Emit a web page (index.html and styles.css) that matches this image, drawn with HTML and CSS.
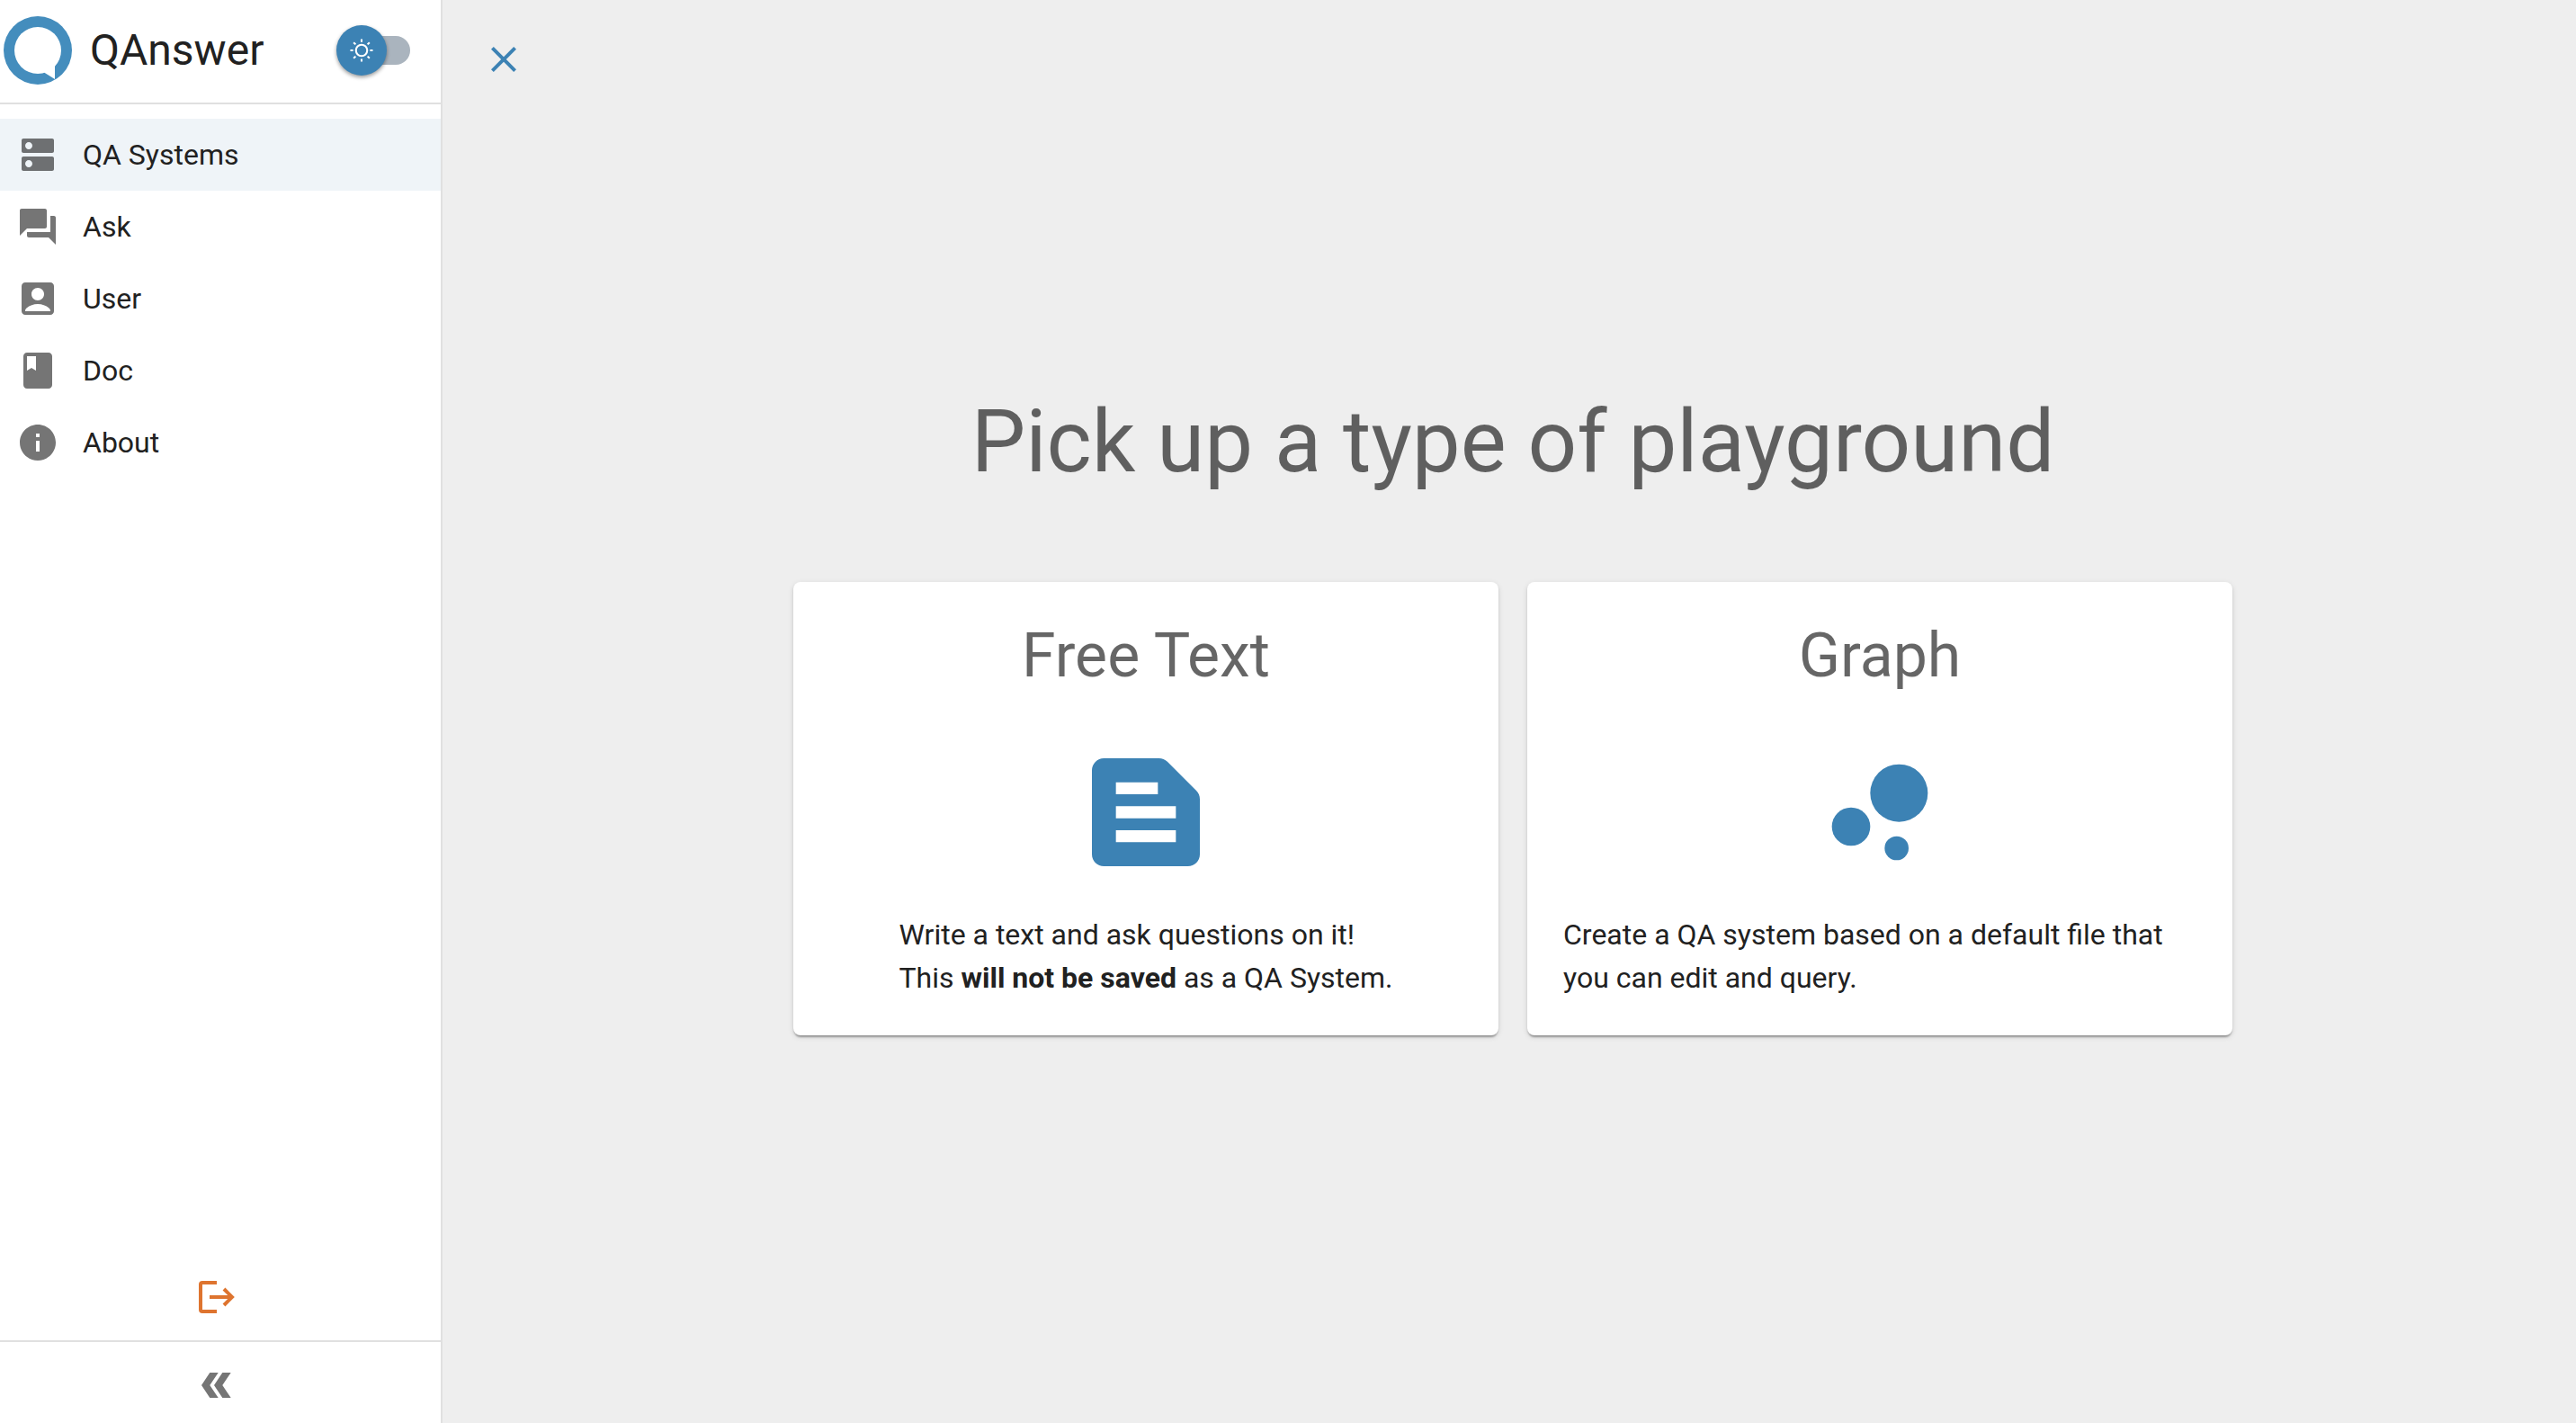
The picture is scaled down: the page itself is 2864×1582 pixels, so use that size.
FILE: index.html
```html
<!DOCTYPE html>
<html lang="en">
<head>
<meta charset="utf-8">
<meta name="viewport" content="width=device-width, initial-scale=1">
<title>QAnswer</title>
<link rel="stylesheet" href="styles.css">
</head>
<body>
<div class="app">
  <aside class="sidebar">
    <header class="brand">
      <svg class="brand-logo" viewBox="0 0 76 76" aria-hidden="true">
        <circle cx="38" cy="38" r="38" fill="#448dbd"/>
        <circle cx="38" cy="38" r="26" fill="#fff"/>
        <path d="M45 62.500L57 70V54L50 50z" fill="#fff"/>
      </svg>
      <span class="brand-name">QAnswer</span>
      <label class="theme-switch">
        <input type="checkbox" role="switch" aria-label="Dark theme">
        <span class="theme-thumb">
          <svg viewBox="0 0 20 20" aria-hidden="true"><path d="M9.305 1.667V3.75h1.389V1.667h-1.39zm-4.707 1.95l-.982.982L5.09 6.072l.982-.982-1.473-1.473zm10.802 0L13.927 5.09l.982.982 1.473-1.473-.982-.982zM10 5.139a4.872 4.872 0 00-4.862 4.86A4.872 4.872 0 0010 14.862 4.872 4.872 0 0014.86 10 4.872 4.872 0 0010 5.139zm0 1.389A3.462 3.462 0 0113.471 10a3.462 3.462 0 01-3.473 3.472A3.462 3.462 0 016.527 10 3.462 3.462 0 0110 6.528zM1.665 9.305v1.39h2.083v-1.39H1.666zm14.583 0v1.39h2.084v-1.39h-2.084zM5.09 13.928L3.616 15.4l.982.982 1.473-1.473-.982-.982zm9.82 0l-.982.982 1.473 1.473.982-.982-1.473-1.473zM9.305 16.25v2.083h1.389V16.25h-1.39z"/></svg>
        </span>
      </label>
    </header>
    <nav class="menu" aria-label="Main">
      <a class="menu-item is-active" href="#systems" aria-current="page">
        <svg class="icon" viewBox="0 0 24 24" aria-hidden="true"><path d="M20 13H4c-.55 0-1 .45-1 1v6c0 .55.45 1 1 1h16c.55 0 1-.45 1-1v-6c0-.55-.45-1-1-1zM7 19c-1.100 0-2-.9-2-2s.9-2 2-2 2 .9 2 2-.9 2-2 2zM20 3H4c-.55 0-1 .45-1 1v6c0 .55.45 1 1 1h16c.55 0 1-.45 1-1V4c0-.55-.45-1-1-1zM7 9c-1.100 0-2-.9-2-2s.9-2 2-2 2 .9 2 2-.9 2-2 2z"/></svg>
        <span>QA Systems</span>
      </a>
      <a class="menu-item" href="#ask">
        <svg class="icon" viewBox="0 0 24 24" aria-hidden="true"><path d="M21 6h-2v9H6v2c0 .55.45 1 1 1h11l4 4V7c0-.55-.45-1-1-1zm-4 6V3c0-.55-.45-1-1-1H3c-.55 0-1 .45-1 1v14l4-4h10c.55 0 1-.45 1-1z"/></svg>
        <span>Ask</span>
      </a>
      <a class="menu-item" href="#user">
        <svg class="icon" viewBox="0 0 24 24" aria-hidden="true"><path d="M19 3H5c-1.100 0-2 .9-2 2v14c0 1.100.9 2 2 2h14c1.100 0 2-.9 2-2V5c0-1.100-.9-2-2-2zm-7 3c1.930 0 3.500 1.570 3.500 3.500S13.930 13 12 13s-3.500-1.570-3.500-3.500S10.070 6 12 6zm7 13H5v-.23c0-.62.28-1.200.76-1.580C7.470 15.820 9.640 15 12 15s4.530.82 6.240 2.190c.48.38.76.97.76 1.580V19z"/></svg>
        <span>User</span>
      </a>
      <a class="menu-item" href="#doc">
        <svg class="icon" viewBox="0 0 24 24" aria-hidden="true"><path d="M18 2H6c-1.100 0-2 .9-2 2v16c0 1.100.9 2 2 2h12c1.100 0 2-.9 2-2V4c0-1.100-.9-2-2-2zM6 4h5v8l-2.500-1.500L6 12V4z"/></svg>
        <span>Doc</span>
      </a>
      <a class="menu-item" href="#about">
        <svg class="icon" viewBox="0 0 24 24" aria-hidden="true"><path d="M12 2C6.480 2 2 6.480 2 12s4.480 10 10 10 10-4.480 10-10S17.520 2 12 2zm1 15h-2v-6h2v6zm0-8h-2V7h2v2z"/></svg>
        <span>About</span>
      </a>
    </nav>
    <footer class="sidebar-footer">
      <button class="icon-button logout" type="button" aria-label="Log out">
        <svg class="icon" viewBox="0 0 48 48" aria-hidden="true"><path d="M25 8H9a2 2 0 0 0-2 2v28a2 2 0 0 0 2 2h16M17 24h25M33 15l9 9-9 9" fill="none" stroke="currentColor" stroke-width="4"/></svg>
      </button>
      <button class="icon-button collapse" type="button" aria-label="Collapse menu">
        <svg class="icon" viewBox="0 0 48 48" aria-hidden="true"><path d="M17.300 10h9.400l-9.400 14 9.400 14h-9.400L8 24zM31.300 10h9.400l-9.400 14 9.400 14h-9.400L22 24z"/></svg>
      </button>
    </footer>
  </aside>
  <main class="content">
    <div class="toolbar">
      <button class="icon-button close" type="button" aria-label="Close">
        <svg class="icon" viewBox="0 0 24 24" aria-hidden="true"><path d="M19 6.410L17.590 5 12 10.590 6.410 5 5 6.410 10.590 12 5 17.590 6.410 19 12 13.410 17.590 19 19 17.590 13.410 12z"/></svg>
      </button>
    </div>
    <section class="picker">
      <h1 class="picker-title">Pick up a type of playground</h1>
      <div class="cards">
        <a class="card" href="#free-text">
          <h2 class="card-title">Free Text</h2>
          <svg class="card-icon" viewBox="0 0 24 24" aria-hidden="true"><path d="M20.410 8.410l-4.830-4.830C15.210 3.210 14.700 3 14.170 3H5c-1.100 0-2 .9-2 2v14c0 1.100.9 2 2 2h14c1.100 0 2-.9 2-2V9.830c0-.53-.21-1.040-.59-1.420zM7 7h7v2H7V7zm10 10H7v-2h10v2zm0-4H7v-2h10v2z"/></svg>
          <p class="card-text">Write a text and ask questions on it!<br>This <strong>will not be saved</strong> as a QA System.</p>
        </a>
        <a class="card" href="#graph">
          <h2 class="card-title">Graph</h2>
          <svg class="card-icon" viewBox="0 0 24 24" aria-hidden="true"><circle cx="7.200" cy="14.400" r="3.200"/><circle cx="14.800" cy="18" r="2"/><circle cx="15.200" cy="8.800" r="4.800"/></svg>
          <p class="card-text">Create a QA system based on a default file that you can edit and query.</p>
        </a>
      </div>
    </section>
  </main>
</div>
</body>
</html>
```

FILE: styles.css
```css
:root {
  --primary: #3c82b4;
  --accent: #de742f;
  --text: #212121;
  --muted: rgba(0, 0, 0, 0.6);
  --icon: #757575;
  --divider: #e0e0e0;
  --selected: #eff4f8;
}

* {
  box-sizing: border-box;
}

body {
  margin: 0;
  font: 32px/48px Roboto, "Liberation Sans", sans-serif;
  color: var(--text);
  background: #eee;
}

.app {
  display: flex;
  min-height: 100vh;
}

.icon {
  display: block;
  flex: none;
  width: 48px;
  height: 48px;
  fill: currentColor;
}

.icon-button {
  display: block;
  padding: 0;
  border: 0;
  background: none;
  cursor: pointer;
}

/* Sidebar */

.sidebar {
  display: flex;
  flex-direction: column;
  flex: 0 0 492px;
  background: #fff;
  border-right: 2px solid var(--divider);
}

.brand {
  display: flex;
  align-items: center;
  padding: 18px 34px 20px 4px;
  border-bottom: 2px solid var(--divider);
}

.brand-logo {
  width: 76px;
  height: 76px;
}

.brand-name {
  margin-left: 20px;
  font-size: 48px;
  line-height: 64px;
}

.theme-switch {
  display: flex;
  align-items: center;
  width: 82px;
  height: 56px;
  margin-left: auto;
  position: relative;
  cursor: pointer;
}

.theme-switch input {
  appearance: none;
  width: 68px;
  height: 32px;
  margin: 0 0 0 auto;
  border-radius: 16px;
  background: #aab4be;
}

.theme-thumb {
  position: absolute;
  left: 0;
  top: 0;
  display: grid;
  place-items: center;
  width: 56px;
  height: 56px;
  border-radius: 50%;
  background: var(--primary);
  box-shadow: 0 2px 4px rgba(0, 0, 0, 0.4);
}

.theme-thumb svg {
  width: 30px;
  height: 30px;
  fill: #fff;
}

.menu {
  padding: 16px 0;
}

.menu-item {
  display: flex;
  align-items: center;
  gap: 26px;
  padding: 16px 18px;
  color: inherit;
  text-decoration: none;
}

.menu-item .icon {
  color: rgba(0, 0, 0, 0.54);
}

.is-active {
  background: var(--selected);
}

.sidebar-footer {
  margin-top: auto;
}

.sidebar-footer .icon-button {
  display: flex;
  justify-content: center;
  width: 100%;
  padding-right: 10px;
}

.sidebar-footer .logout {
  padding-top: 24px;
  padding-bottom: 24px;
  color: var(--accent);
  border-bottom: 2px solid var(--divider);
}

.sidebar-footer .collapse {
  padding-top: 24px;
  padding-bottom: 18px;
  color: var(--icon);
}

/* Content */

.content {
  display: grid;
  grid-template-rows: 1fr auto 1fr;
  flex: 1;
  min-width: 0;
}

.toolbar {
  padding: 42px 44px 0;
}

.close {
  color: var(--primary);
}

.picker {
  padding: 4px 32px 0 40px;
}

.picker-title {
  margin: 0 0 100px;
  font-size: 96px;
  font-weight: 400;
  line-height: 112px;
  text-align: center;
  color: var(--muted);
}

.cards {
  display: grid;
  grid-template-columns: 1fr 1fr;
  gap: 32px;
  max-width: 1600px;
  margin: 0 auto;
}

.card {
  display: flex;
  flex-direction: column;
  align-items: center;
  padding: 40px;
  border-radius: 8px;
  background: #fff;
  color: inherit;
  text-decoration: none;
  box-shadow: 0 4px 2px -2px rgba(0, 0, 0, 0.2), 0 2px 2px rgba(0, 0, 0, 0.14), 0 2px 6px rgba(0, 0, 0, 0.12);
}

.card-title {
  margin: 0 0 52px;
  font-size: 68px;
  font-weight: 400;
  line-height: 84px;
  color: var(--muted);
}

.card-icon {
  width: 160px;
  height: 160px;
  margin-bottom: 32px;
  fill: var(--primary);
}

.card-text {
  margin: 0;
}

.card-text strong {
  font-weight: 700;
}
```
